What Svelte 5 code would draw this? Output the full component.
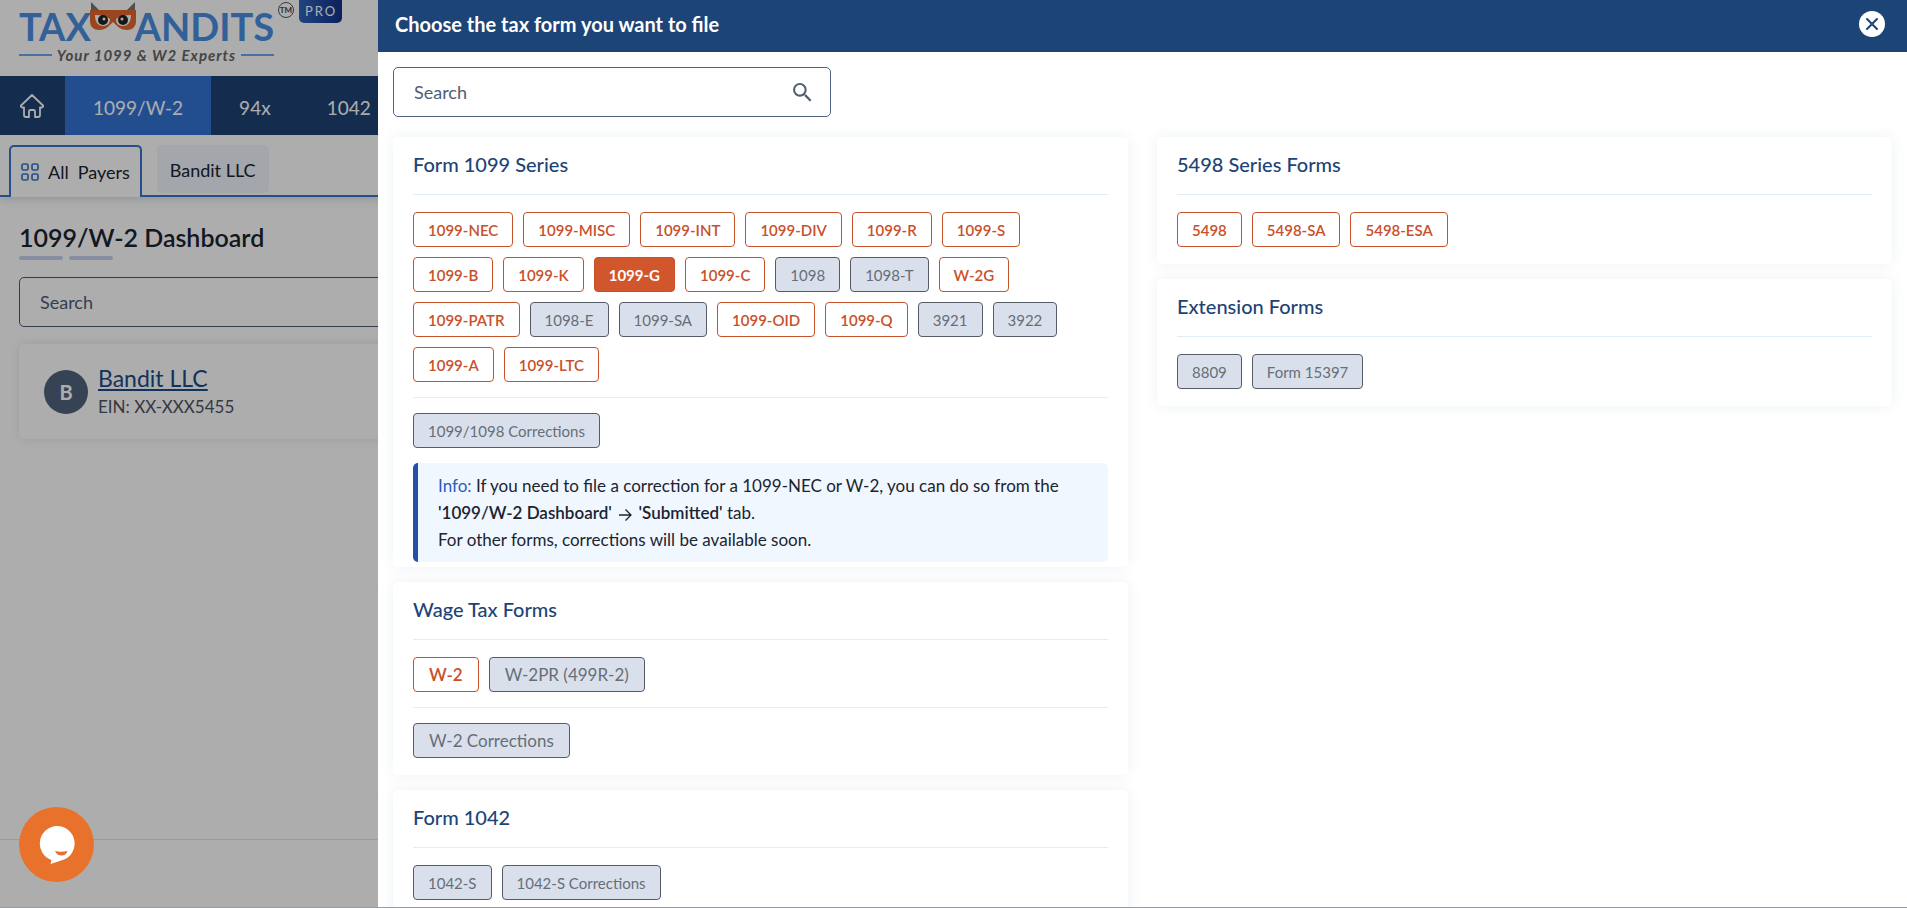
<script lang="ts">
    type Form = { name: string; state?: "off" | "active" };

    const off = (name: string): Form => ({ name, state: "off" });
    const on = (name: string): Form => ({ name });

    const series1099: Form[] = [
        on("1099-NEC"),
        on("1099-MISC"),
        on("1099-INT"),
        on("1099-DIV"),
        on("1099-R"),
        on("1099-S"),
        on("1099-B"),
        on("1099-K"),
        { name: "1099-G", state: "active" },
        on("1099-C"),
        off("1098"),
        off("1098-T"),
        on("W-2G"),
        on("1099-PATR"),
        off("1098-E"),
        off("1099-SA"),
        on("1099-OID"),
        on("1099-Q"),
        off("3921"),
        off("3922"),
        on("1099-A"),
        on("1099-LTC"),
    ];

    const navItems = ["1099/W-2", "94x", "1042"];

    let search = $state("");
    let payerSearch = $state("");
</script>

{#snippet chips(forms: Form[], large = false)}
    <div class="chips" class:large>
        {#each forms as form (form.name)}
            <button
                type="button"
                class="chip"
                class:active={form.state === "active"}
                disabled={form.state === "off"}>{form.name}</button
            >
        {/each}
    </div>
{/snippet}

<div class="page">
    <header class="top">
        <a class="logo" href="#home" aria-label="TaxBandits">
            <span class="word">
                <span>TAX</span>
                <svg class="mask" viewBox="0 0 48 30" width="48" height="30" aria-hidden="true">
                    <path d="M2 1 10 9H2zM46 1 38 9h8z" fill="#777" />
                    <path
                        d="M1 9h46v11c0 6-4 9-9 9-6 0-9-3-14-8-5 5-8 8-14 8-5 0-9-3-9-9z"
                        fill="#e2662b"
                    />
                    <path
                        d="M6 14c6 0 11 1 15 4 0 5-3 7-7 7-5 0-8-4-8-11zM42 14c-6 0-11 1-15 4 0 5 3 7 7 7 5 0 8-4 8-11z"
                        fill="#fff"
                    />
                    <circle cx="14" cy="19" r="5" fill="#222" />
                    <circle cx="34" cy="19" r="5" fill="#222" />
                    <circle cx="15" cy="18" r="1.500" fill="#fff" />
                    <circle cx="33" cy="18" r="1.500" fill="#fff" />
                </svg>
                <span>ANDITS</span>
            </span>
            <span class="tagline">Your 1099 &amp; W2 Experts</span>
        </a>
        <span class="tm">TM</span>
        <span class="pro">PRO</span>
    </header>

    <nav class="nav">
        <a class="home" href="#home" aria-label="Home">
            <svg viewBox="0 0 24 24" width="24" height="24" aria-hidden="true">
                <path
                    d="M12 1 1 11.500c-.6 1 .2 2 1.200 2H4V21c0 1.200.8 2 2 2h3v-5.500c0-1 .6-1.500 1.500-1.500h3c.9 0 1.500.5 1.500 1.500V23h3c1.200 0 2-.8 2-2v-7.500h1.800c1 0 1.800-1 1.200-2z"
                    fill="none"
                    stroke="currentColor"
                    stroke-width="1.800"
                    stroke-linejoin="round"
                />
            </svg>
        </a>
        {#each navItems as item, i}
            <a href="#nav" class:current={i === 0}>{item}</a>
        {/each}
    </nav>

    <div class="tabs">
        <button type="button" class="tab selected">
            <svg viewBox="0 0 18 18" width="18" height="18" aria-hidden="true">
                <g fill="none" stroke="currentColor" stroke-width="1.700">
                    <rect x="1" y="1" width="6" height="6" rx="1.500" />
                    <rect x="11" y="1" width="6" height="6" rx="1.500" />
                    <rect x="1" y="11" width="6" height="6" rx="1.500" />
                    <rect x="11" y="11" width="6" height="6" rx="1.500" />
                </g>
            </svg>
            <span>All</span>
            <span>Payers</span>
        </button>
        <button type="button" class="tab">Bandit LLC</button>
    </div>

    <main class="dashboard">
        <h1>1099/W-2 Dashboard</h1>
        <div class="bars"><i></i><i></i></div>
        <input
            class="field"
            type="text"
            placeholder="Search"
            aria-label="Search payers"
            bind:value={payerSearch}
        />
        <article class="payer">
            <span class="avatar">B</span>
            <div>
                <a href="#payer">Bandit LLC</a>
                <p>EIN: XX-XXX5455</p>
            </div>
        </article>
    </main>

    <footer class="footer"></footer>
</div>

<div class="scrim"></div>

<section class="drawer" aria-label="Tax forms">
    <header class="drawerHead">
        <h2>Choose the tax form you want to file</h2>
        <button type="button" class="close" aria-label="Close">
            <svg viewBox="0 0 26 26" width="26" height="26" aria-hidden="true">
                <path
                    d="M8 8 18 18M18 8 8 18"
                    stroke="currentColor"
                    stroke-width="2"
                    stroke-linecap="round"
                />
            </svg>
        </button>
    </header>

    <div class="drawerBody">
        <label class="search">
            <input type="text" placeholder="Search" aria-label="Search forms" bind:value={search} />
            <svg viewBox="3 3 18 18" width="19" height="19" aria-hidden="true">
                <path
                    d="M15.500 14h-.79l-.28-.27A6.470 6.470 0 0 0 16 9.500 6.500 6.500 0 1 0 9.500 16c1.610 0 3.090-.59 4.230-1.570l.27.28v.79l5 4.990L20.490 19zm-6 0C7.010 14 5 11.990 5 9.500S7.010 5 9.500 5 14 7.010 14 9.500 11.990 14 9.500 14z"
                    fill="currentColor"
                />
            </svg>
        </label>

        <div class="columns">
            <div class="column">
                <section class="card tight">
                    <h3>Form 1099 Series</h3>
                    {@render chips(series1099)}
                    <hr />
                    {@render chips([off("1099/1098 Corrections")])}
                    <p class="info">
                        <span class="label">Info:</span> If you need to file a correction for a 1099-NEC
                        or W-2, you can do so from the <b>'1099/W-2 Dashboard'</b>
                        <svg viewBox="0 0 14 14" width="14" height="14" aria-hidden="true">
                            <path
                                d="M1 7h12M7.500 1.500 13 7l-5.500 5.500"
                                fill="none"
                                stroke="currentColor"
                                stroke-width="1.300"
                            />
                        </svg>
                        <b>'Submitted'</b> tab.<br />For other forms, corrections will be available soon.
                    </p>
                </section>

                <section class="card">
                    <h3>Wage Tax Forms</h3>
                    {@render chips([on("W-2"), off("W-2PR (499R-2)")], true)}
                    <hr />
                    {@render chips([off("W-2 Corrections")], true)}
                </section>

                <section class="card">
                    <h3>Form 1042</h3>
                    {@render chips([off("1042-S"), off("1042-S Corrections")])}
                </section>
            </div>

            <div class="column">
                <section class="card">
                    <h3>5498 Series Forms</h3>
                    {@render chips([on("5498"), on("5498-SA"), on("5498-ESA")])}
                </section>

                <section class="card">
                    <h3>Extension Forms</h3>
                    {@render chips([off("8809"), off("Form 15397")])}
                </section>
            </div>
        </div>
    </div>
</section>

<button type="button" class="chat" aria-label="Open chat">
    <svg viewBox="0 0 36 40" width="36" height="40" aria-hidden="true">
        <path d="M18 1a17.500 17.500 0 0 0-5.500 34l-1 4 13-4.200A17.500 17.500 0 0 0 18 1z" fill="#fff" />
        <path d="M16 26c4 1 8 1 12.500 0-1.500 6-10.500 6-12.500 0z" fill="#e8722c" />
    </svg>
</button>

<style>
    :global(body) {
        background: #fff;
        color: #1b2430;
        font-family: Lato, "Open Sans", sans-serif;
        font-size: 17px;
    }

    :global(*) {
        box-sizing: border-box;
    }

    button,
    input {
        font: inherit;
        color: inherit;
    }

    h1,
    h2,
    h3,
    p {
        margin: 0;
    }

    .page {
        display: flex;
        flex-direction: column;
        height: 100vh;
        overflow: hidden;
    }

    .top {
        display: flex;
        flex: none;
        align-items: flex-start;
        height: 76px;
        padding-left: 19px;
    }

    .logo {
        display: flex;
        flex-direction: column;
        width: 255px;
        color: #4a8fe2;
        text-decoration: none;
    }

    .word {
        display: flex;
        align-items: flex-start;
        justify-content: space-between;
        height: 46px;
        font-size: 38px;
        font-weight: 700;
        line-height: 52px;
    }

    .mask {
        flex: none;
        margin: 1px -4px 0;
    }

    .tagline {
        display: flex;
        align-items: center;
        gap: 5px;
        color: #666;
        font-size: 15px;
        font-style: italic;
        font-weight: 700;
        letter-spacing: 1px;
        line-height: 18px;
        white-space: nowrap;
    }

    .tagline::before,
    .tagline::after {
        content: "";
        flex: 1;
        height: 2px;
        background: #6ea6e8;
    }

    .tm {
        display: grid;
        place-items: center;
        width: 16px;
        height: 16px;
        margin: 2px 5px 0 4px;
        border: 1px solid #555;
        border-radius: 50%;
        color: #444;
        font-size: 8px;
        font-weight: 700;
    }

    .pro {
        padding: 0 5px 0 6px;
        border-radius: 0 0 5px 5px;
        background: linear-gradient(90deg, #2f66c0, #12308a);
        color: #fff;
        font-size: 13px;
        letter-spacing: 2px;
        line-height: 23px;
    }

    .nav {
        display: flex;
        flex: none;
        height: 59px;
        background: #1e4373;
    }

    .nav a {
        display: flex;
        align-items: center;
        padding: 4px 28px 0;
        color: #fff;
        font-size: 19px;
        text-decoration: none;
    }

    .nav .home {
        width: 65px;
        padding: 0 20px;
    }

    .nav .current {
        background: #3374d5;
    }

    .tabs {
        display: flex;
        flex: none;
        align-items: flex-start;
        gap: 15px;
        height: 62px;
        padding: 10px 9px 0;
        border-bottom: 2px solid #3a75c8;
        box-shadow: 0 2px 8px rgba(40, 70, 120, 0.2);
    }

    .tab {
        display: flex;
        align-items: center;
        gap: 9px;
        height: 48px;
        padding: 2px 13px 0;
        border: 0;
        border-radius: 5px;
        background: #f0f5fb;
        font-size: 18px;
    }

    .tab.selected {
        height: 52px;
        padding: 0 10px;
        border: 2px solid #3a75c8;
        border-bottom: 0;
        border-radius: 5px 5px 0 0;
        background: #fff;
    }

    .tab svg {
        color: #3a75c8;
    }

    .dashboard {
        flex: 1;
        padding: 22px 19px 0;
    }

    h1 {
        font-size: 25px;
        font-weight: 600;
        line-height: 36px;
    }

    .bars {
        display: flex;
        gap: 6px;
        margin: 1px 0 17px;
    }

    .bars i {
        width: 44px;
        height: 4px;
        border-radius: 2px;
        background: #c9d2ee;
    }

    .field {
        display: block;
        width: 100%;
        height: 50px;
        padding: 0 20px;
        border: 1px solid #4a5a75;
        border-radius: 5px;
        background: #fff;
        font-size: 18px;
    }

    input::placeholder {
        color: #4f5d75;
        opacity: 1;
    }

    .payer {
        display: flex;
        align-items: center;
        gap: 10px;
        height: 95px;
        margin-top: 17px;
        padding: 0 25px;
        border-radius: 5px;
        box-shadow: 0 0 10px rgba(60, 90, 120, 0.15);
    }

    .avatar {
        display: grid;
        place-items: center;
        width: 44px;
        height: 44px;
        border-radius: 50%;
        background: #50647c;
        color: #fff;
        font-size: 20px;
        font-weight: 700;
    }

    .payer a {
        color: #1e4a88;
        font-size: 23px;
        line-height: 30px;
    }

    .payer p {
        color: #4c5461;
        font-size: 17px;
        line-height: 28px;
    }

    .footer {
        flex: none;
        height: 69px;
        border-top: 1px solid #e2e6ea;
        border-bottom: 1px solid #e2e6ea;
    }

    .scrim {
        position: fixed;
        inset: 0;
        background: rgba(0, 0, 0, 0.32);
    }

    .drawer {
        position: fixed;
        inset: 0 0 1px 378px;
        overflow: hidden;
        background: #fff;
    }

    .drawerHead {
        display: flex;
        align-items: center;
        justify-content: space-between;
        height: 52px;
        padding: 0 22px 4px 17px;
        background: #1d4476;
        color: #fff;
    }

    h2 {
        font-size: 20px;
        font-weight: 700;
        line-height: 28px;
    }

    .close {
        width: 26px;
        height: 26px;
        padding: 0;
        border: 0;
        border-radius: 50%;
        background: #fff;
        color: #1d4476;
    }

    .close svg {
        display: block;
    }

    .drawerBody {
        padding: 15px;
    }

    .search {
        display: flex;
        align-items: center;
        width: 438px;
        height: 50px;
        padding: 0 18px 0 20px;
        border: 1px solid #4f6080;
        border-radius: 5px;
        color: #4f5d75;
    }

    .search input {
        flex: 1;
        min-width: 0;
        padding: 0;
        border: 0;
        outline: 0;
        background: none;
        font-size: 18px;
    }

    .columns {
        display: grid;
        grid-template-columns: 1fr 1fr;
        gap: 29px;
        margin-top: 20px;
    }

    .column {
        display: flex;
        flex-direction: column;
        gap: 15px;
    }

    .card {
        padding: 13px 20px 17px;
        border-radius: 5px;
        box-shadow: 0 0 14px rgba(80, 130, 160, 0.11);
    }

    .card.tight {
        padding-bottom: 5px;
    }

    h3 {
        margin-bottom: 17px;
        padding-bottom: 16px;
        border-bottom: 1px solid #e3ebf5;
        color: #1d4476;
        font-size: 20px;
        font-weight: 500;
        line-height: 28px;
    }

    hr {
        margin: 15px 0;
        border: 0;
        border-top: 1px solid #e9edf0;
    }

    .chips {
        display: flex;
        flex-wrap: wrap;
        gap: 10px;
        padding-right: 24px;
    }

    .chip {
        height: 35px;
        padding: 0 14px;
        border: 1px solid #c4532b;
        border-radius: 4px;
        background: #fff;
        color: #c9502a;
        font-size: 15px;
        font-weight: 600;
    }

    .chip:disabled {
        border-color: #565c66;
        background: #d9e0eb;
        color: #676e79;
        font-weight: 400;
    }

    .chip.active {
        border-color: #c9502a;
        background: #d2562c;
        color: #fff;
        font-weight: 700;
    }

    .large .chip {
        padding: 0 15px;
        font-size: 17px;
    }

    .info {
        margin-top: 15px;
        padding: 9px 20px;
        border-left: 5px solid #2450a8;
        border-radius: 5px;
        background: #f1f7ff;
        font-size: 17px;
        line-height: 27px;
    }

    .info .label {
        color: #2c5cba;
    }

    .info b {
        font-weight: 600;
    }

    .info svg {
        margin: 0 2px;
        vertical-align: -3px;
    }

    .chat {
        position: fixed;
        bottom: 26px;
        left: 19px;
        display: grid;
        place-items: center;
        width: 75px;
        height: 75px;
        padding: 0;
        border: 0;
        border-radius: 50%;
        background: #e8722c;
    }
</style>
